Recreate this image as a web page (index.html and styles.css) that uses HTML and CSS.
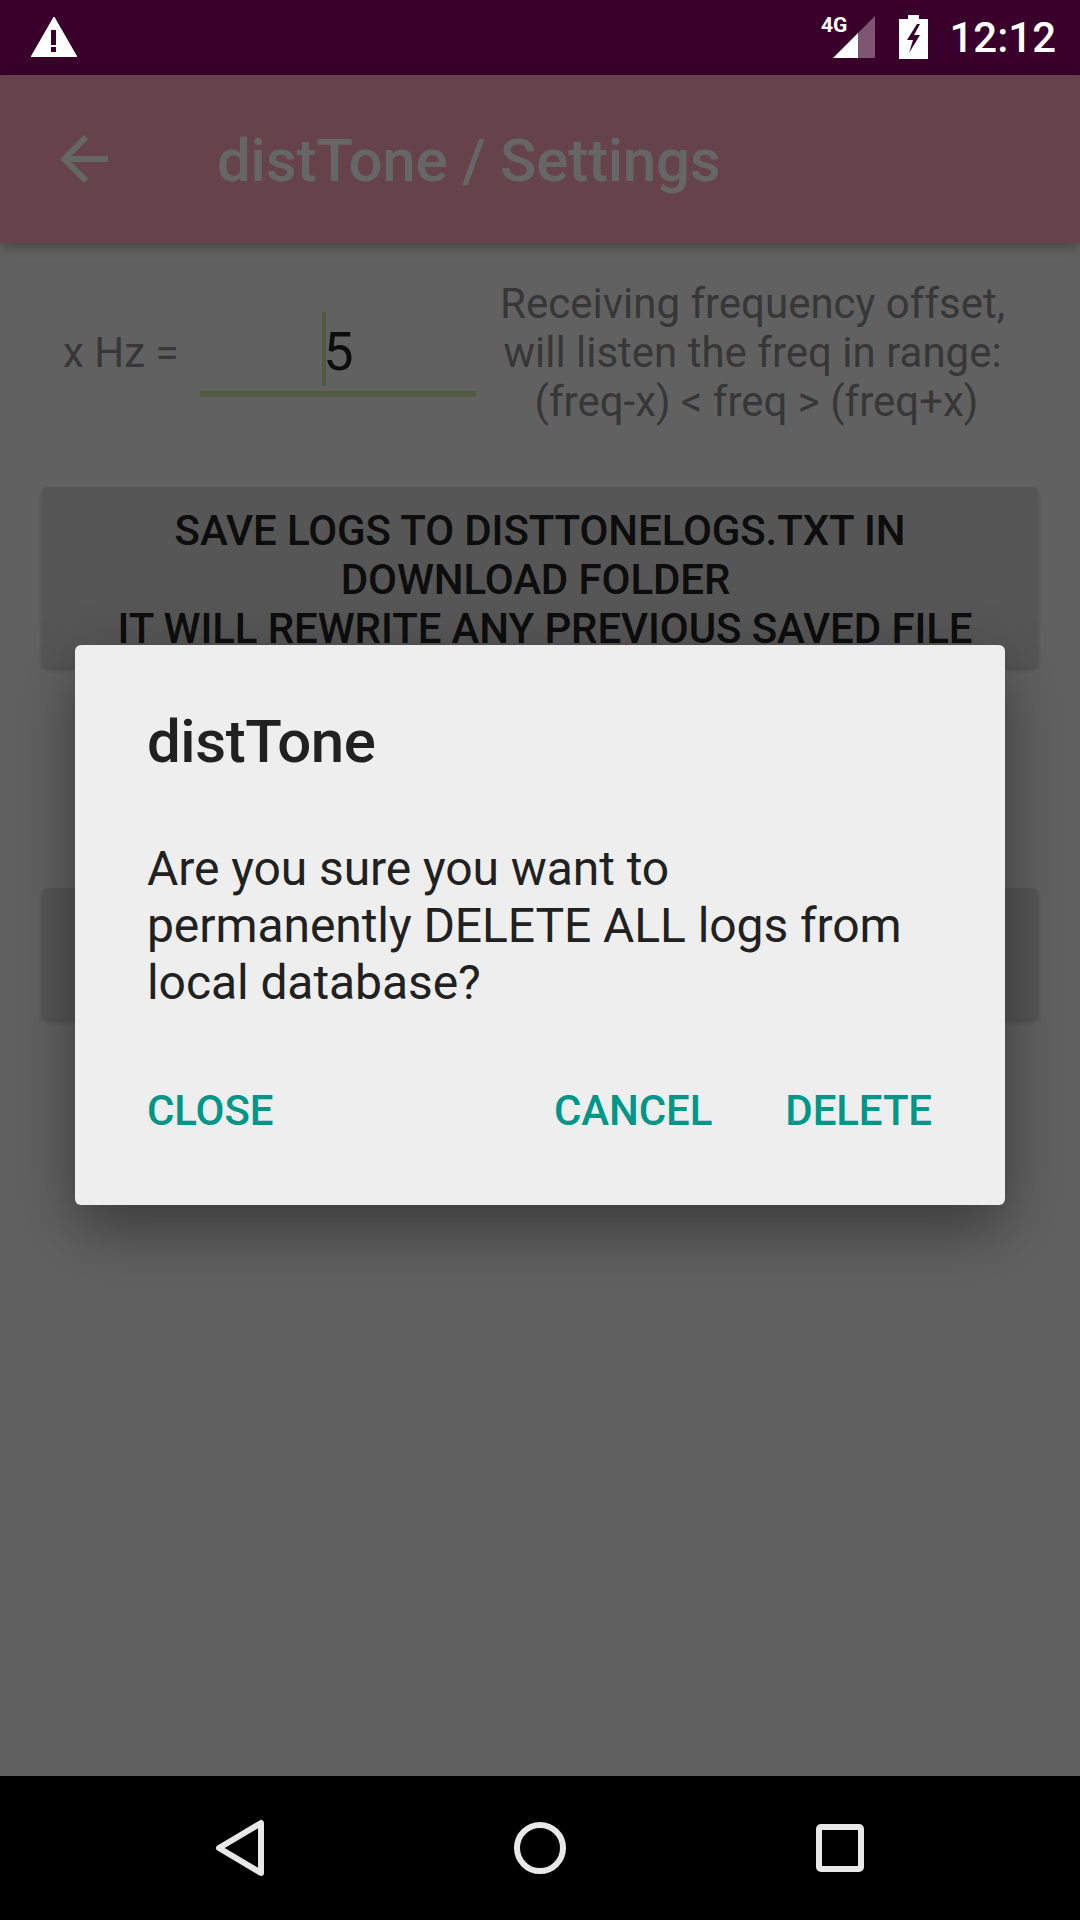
FILE: index.html
```html
<!DOCTYPE html>
<html lang="en">
<head>
    <meta charset="UTF-8">
    <meta name="viewport" content="width=device-width, initial-scale=1.0">
    <title>distTone / Settings</title>
    <link rel="stylesheet" href="styles.css">
</head>
<body>
    <div class="status-bar">
        <svg class="warn-icon" width="46" height="40" viewBox="0 0 46 40">
            <path d="M23 0 L46 40 L0 40 Z" fill="#fff" stroke="#fff" stroke-width="1" stroke-linejoin="round"/>
            <rect x="20" y="13" width="5" height="15" fill="#38002a"/>
            <rect x="20" y="30" width="5" height="5" fill="#38002a"/>
        </svg>
        <div class="status-right">
            <div class="signal">
                <span class="signal-label">4G</span>
                <svg width="42" height="42" viewBox="0 0 42 42">
                    <path d="M42 0 V42 H25 V17 Z" fill="#7d5570"/>
                    <path d="M25 17 V42 H0 Z" fill="#fff"/>
                </svg>
            </div>
            <svg class="battery" width="29" height="44" viewBox="0 0 29 44">
                <path d="M9 0 H20 V4 H29 V44 H0 V4 H9 Z" fill="#fff"/>
                <path d="M18 9 L8 25 H14 L10 38 L21 20 H15 L21 9 Z" fill="#38002a"/>
            </svg>
            <span class="clock">12:12</span>
        </div>
    </div>

    <div class="app">
        <div class="app-bar">
            <svg class="back-icon" width="72" height="72" viewBox="0 0 24 24">
                <path d="M20 11H7.83l5.59-5.59L12 4l-8 8 8 8 1.41-1.41L7.83 13H20v-2z" fill="#fff"/>
            </svg>
            <h1 class="app-title">distTone / Settings</h1>
        </div>

        <div class="content">
            <div class="offset-row">
                <span class="offset-label">x Hz =</span>
                <div class="offset-input"><i class="caret"></i><span>5</span></div>
                <p class="offset-hint">
                    <span class="line">Receiving frequency offset,</span>
                    <span class="line">will listen the freq in range:</span>
                    <span class="line hint-last">(freq-x) &lt; freq &gt; (freq+x)</span>
                </p>
            </div>
            <div class="card save-card">
                <span class="line">SAVE LOGS TO DISTTONELOGS.TXT IN</span>
                <span class="line save-second">DOWNLOAD FOLDER</span>
                <span class="line save-third">IT WILL REWRITE ANY PREVIOUS SAVED FILE</span>
            </div>
            <div class="card delete-card"></div>
        </div>

        <div class="scrim">
            <div class="dialog">
                <h2 class="dialog-title">distTone</h2>
                <p class="dialog-message">Are you sure you want to<br>permanently DELETE ALL logs from<br>local database?</p>
                <div class="dialog-actions">
                    <span class="dialog-btn neutral">CLOSE</span>
                    <span class="dialog-btn">CANCEL</span>
                    <span class="dialog-btn">DELETE</span>
                </div>
            </div>
        </div>
    </div>

    <div class="nav-bar">
        <svg width="60" height="68" viewBox="0 0 60 68">
            <path d="M51 9 V59 L9 34 Z" fill="none" stroke="#e8e8e8" stroke-width="6" stroke-linejoin="round"/>
        </svg>
        <svg width="60" height="60" viewBox="0 0 60 60">
            <circle cx="30" cy="30" r="23" fill="none" stroke="#e8e8e8" stroke-width="6"/>
        </svg>
        <svg width="60" height="60" viewBox="0 0 60 60">
            <rect x="9" y="9" width="42" height="42" rx="2" fill="none" stroke="#e8e8e8" stroke-width="6"/>
        </svg>
    </div>
</body>
</html>
```
FILE: styles.css
```css
html, body {
    margin: 0;
    padding: 0;
    width: 1080px;
    height: 1920px;
    overflow: hidden;
}

body {
    display: flex;
    flex-direction: column;
    font-family: Roboto, "Liberation Sans", sans-serif;
    background-color: #000;
}

.line {
    display: block;
}

.status-bar {
    height: 75px;
    display: flex;
    align-items: center;
    justify-content: space-between;
    padding: 0 24px 0 31px;
    background-color: #38002a;
    color: #fff;
}

.warn-icon {
    margin-top: -1px;
}

.status-right {
    display: flex;
    align-items: center;
}

.signal {
    display: flex;
    align-items: flex-start;
    height: 42px;
    margin-top: -1px;
}

.signal-label {
    margin-right: -14px;
    font-size: 21px;
    font-weight: 700;
    line-height: 18px;
}

.battery {
    margin-left: 24px;
    margin-top: -1px;
}

.clock {
    margin-left: 21px;
    font-size: 42px;
    font-weight: 500;
}

.app {
    position: relative;
    flex: 1;
    background-color: #f3f3f3;
}

.app-bar {
    height: 168px;
    display: flex;
    align-items: center;
    padding-left: 48px;
    background-color: #ffa5bb;
    box-shadow: 0 4px 12px rgba(0, 0, 0, 0.3);
}

.back-icon {
    margin-right: 97px;
}

.app-title {
    margin: 0;
    padding-top: 2px;
    font-size: 60px;
    font-weight: 500;
    letter-spacing: -0.2px;
    color: #fff;
}

.content {
    padding: 36px 42px 0;
}

.offset-row {
    display: flex;
    align-items: center;
    height: 147px;
}

.offset-label {
    width: 158px;
    padding-left: 21px;
    box-sizing: border-box;
    font-size: 42px;
    white-space: nowrap;
    color: #8a8a8a;
}

.offset-input {
    width: 276px;
    height: 85px;
    margin-top: 4px;
    display: flex;
    align-items: center;
    justify-content: center;
    box-sizing: border-box;
    border-bottom: 6px solid #c6e2a3;
    font-size: 54px;
    color: #212121;
}

.caret {
    width: 4px;
    height: 74px;
    margin-right: -3px;
    margin-bottom: 5px;
    background-color: #c6e2a3;
}

.offset-hint {
    margin: 0 0 0 24px;
    width: 505px;
    font-size: 42px;
    line-height: 49px;
    text-align: center;
    color: #8a8a8a;
}

.hint-last {
    padding-left: 8px;
}

.card {
    padding: 0 16px;
    border-radius: 6px;
    background-color: #d6d7d7;
    box-shadow: 0 3px 5px rgba(0, 0, 0, 0.2);
    font-size: 42px;
    font-weight: 500;
    line-height: 49px;
    letter-spacing: -0.1px;
    text-align: center;
    color: #212121;
}

.save-card {
    height: 180px;
    margin-top: 61px;
    padding-top: 19px;
    box-sizing: border-box;
}

.save-second {
    padding-right: 9px;
}

.save-third {
    padding-left: 10px;
}

.delete-card {
    height: 131px;
    margin-top: 221px;
}

.scrim {
    position: absolute;
    top: 0;
    left: 0;
    right: 0;
    bottom: 0;
    display: flex;
    align-items: center;
    justify-content: center;
    background-color: rgba(0, 0, 0, 0.6);
}

.dialog {
    width: 930px;
    height: 560px;
    margin-bottom: 1px;
    box-sizing: border-box;
    padding: 62px 73px 0 72px;
    border-radius: 6px;
    background-color: #eee;
    box-shadow: 0 24px 60px rgba(0, 0, 0, 0.4);
    color: #212121;
}

.dialog-title {
    margin: 0;
    font-size: 60px;
    font-weight: 500;
    line-height: 70px;
    letter-spacing: -0.45px;
}

.dialog-message {
    margin: 63px 0 0;
    font-size: 48px;
    line-height: 57px;
    letter-spacing: -0.08px;
}

.dialog-actions {
    display: flex;
    gap: 73px;
    margin-top: 75px;
}

.dialog-btn {
    font-size: 42px;
    font-weight: 500;
    line-height: 49px;
    letter-spacing: -0.1px;
    color: #009688;
}

.neutral {
    margin-right: auto;
}

.nav-bar {
    height: 144px;
    display: flex;
    align-items: center;
    justify-content: space-between;
    padding: 0 210px;
    background-color: #000;
}
```
